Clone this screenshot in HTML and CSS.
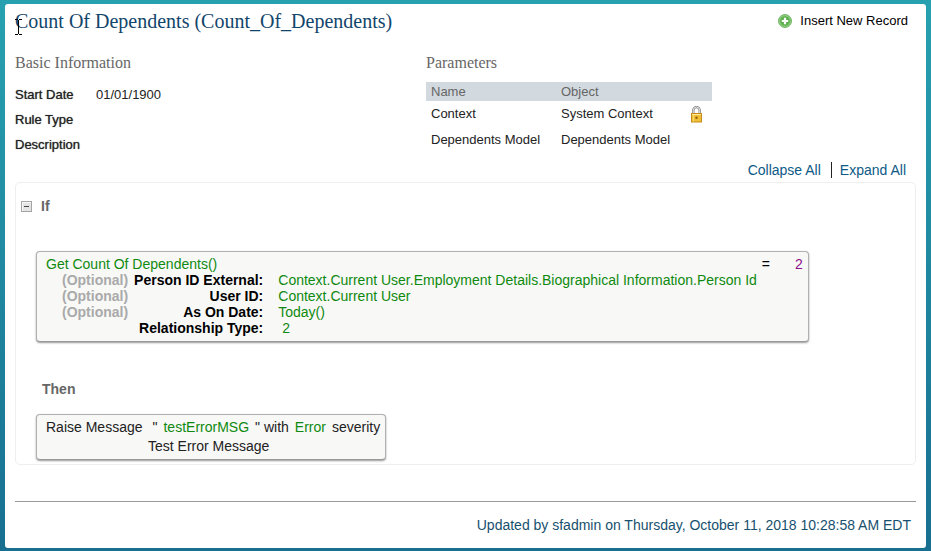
FILE: index.html
```
<!DOCTYPE html>
<html lang="en">
<head>
    <meta charset="UTF-8">
    <meta name="viewport" content="width=device-width, initial-scale=1.0">
    <title>Count Of Dependents</title>
    <link rel="stylesheet" href="styles.css">
</head>
<body>
    <main class="panel">
        <header class="header">
            <h1>Count Of Dependents (Count_Of_Dependents)</h1>
            <button type="button" class="insert">
                <svg width="14" height="14" viewBox="0 0 14 14" aria-hidden="true">
                    <circle cx="7" cy="7" r="6.5" fill="#8ccb7c" stroke="#79b86c"/>
                    <circle cx="7" cy="7" r="4.8" fill="#5fb04f"/>
                    <path d="M7 3.8v6.4M3.8 7h6.4" stroke="#fff" stroke-width="2.2"/>
                </svg>
                Insert New Record
            </button>
        </header>
        <svg class="cursor" width="7" height="16" viewBox="0 0 7 16" aria-hidden="true">
            <path d="M0 .5h3M4 .5h3M3.5 1v14M0 15.5h3M4 15.5h3" stroke="#000" fill="none"/>
        </svg>

        <div class="details">
            <section>
                <h2>Basic Information</h2>
                <dl class="info">
                    <dt>Start Date</dt><dd>01/01/1900</dd>
                    <dt>Rule Type</dt><dd></dd>
                    <dt>Description</dt><dd></dd>
                </dl>
            </section>
            <section>
                <h2>Parameters</h2>
                <table class="params">
                    <thead>
                        <tr><th>Name</th><th>Object</th><th></th></tr>
                    </thead>
                    <tbody>
                        <tr>
                            <td>Context</td>
                            <td>System Context</td>
                            <td>
                                <svg width="13" height="17" viewBox="0 0 13 17" aria-hidden="true">
                                    <path d="M3.3 8V4.3a3.2 3.2 0 0 1 6.4 0V8" fill="none" stroke="#858585" stroke-width="2.4"/>
                                    <path d="M3.3 8V4.3a3.2 3.2 0 0 1 6.4 0V8" fill="none" stroke="#e2e2e2" stroke-width="1"/>
                                    <rect x="1.5" y="7.5" width="10" height="8.5" fill="#efbf35" stroke="#c68a1c"/>
                                    <path d="M2 8.5h9" stroke="#ffe995"/>
                                    <path d="M3.5 9v6.5" stroke="#f9d965"/>
                                    <circle cx="6.5" cy="11.8" r="1.2" fill="#94600d"/>
                                </svg>
                            </td>
                        </tr>
                        <tr><td>Dependents Model</td><td>Dependents Model</td><td></td></tr>
                    </tbody>
                </table>
            </section>
        </div>

        <nav class="tools">
            <a href="#">Collapse All</a>
            <a href="#">Expand All</a>
        </nav>

        <section class="rule">
            <div class="rule-head">
                <button type="button" class="toggle" aria-label="Collapse">
                    <svg width="11" height="11" viewBox="0 0 11 11" aria-hidden="true">
                        <rect x=".5" y=".5" width="10" height="10" fill="#e4e4e4" stroke="#a5a5a5"/>
                        <path d="M1 1.5h9M1.5 1v9" stroke="#f8f8f8"/>
                        <path d="M3 5.5h5" stroke="#444"/>
                    </svg>
                </button>
                <h3>If</h3>
            </div>
            <div class="box condition">
                <div>
                    <div class="value">Get Count Of Dependents()</div>
                    <div class="args">
                        <span class="optional">(Optional)</span><b>Person ID External:</b><span class="value">Context.Current User.Employment Details.Biographical Information.Person Id</span>
                        <span class="optional">(Optional)</span><b>User ID:</b><span class="value">Context.Current User</span>
                        <span class="optional">(Optional)</span><b>As On Date:</b><span class="value">Today()</span>
                        <span></span><b>Relationship Type:</b><span class="value literal">2</span>
                    </div>
                </div>
                <span class="operator">=</span>
                <span class="number">2</span>
            </div>
            <h3 class="then">Then</h3>
            <div class="box action">
                <div class="message">
                    <span>Raise Message</span>
                    <span class="quote">"</span>
                    <span class="value">testErrorMSG</span>
                    <span>" with</span>
                    <span class="value">Error</span>
                    <span>severity</span>
                </div>
                <div class="message-text">Test Error Message</div>
            </div>
        </section>

        <footer class="footer">
            <a href="#">Updated by sfadmin on Thursday, October 11, 2018 10:28:58 AM EDT</a>
        </footer>
    </main>
</body>
</html>
```
FILE: styles.css
```
* {
    box-sizing: border-box;
}
body {
    margin: 0;
    padding: 4px 5px 3px;
    min-height: 100vh;
    display: flex;
    background: linear-gradient(#27a1b0, #186f90);
    font-family: "Liberation Sans", Arial, sans-serif;
    font-size: 14px;
    line-height: 16px;
    color: #222;
}
h1, h2, h3, dl, dd {
    margin: 0;
}
button {
    font: inherit;
    color: inherit;
    background: none;
    border: none;
    padding: 0;
    cursor: pointer;
}
svg {
    display: block;
}
a {
    color: #0d5a86;
    text-decoration: none;
}
.panel {
    position: relative;
    flex: 1;
    padding: 5px 10px 0;
    background: #fff;
    border-radius: 3px;
}
.header {
    display: flex;
    justify-content: space-between;
    align-items: center;
    padding-right: 8px;
}
h1 {
    font: 20px/24px "Liberation Serif", "Times New Roman", serif;
    color: #12456b;
}
.insert {
    display: flex;
    align-items: center;
    gap: 8px;
    font-size: 13px;
    color: #000;
}
/* text pointer over the title */
.cursor {
    position: absolute;
    left: 10px;
    top: 15px;
}
.details {
    display: grid;
    grid-template-columns: 411px 1fr;
    margin-top: 20px;
    font-size: 13px;
}
h2 {
    font: 16px/20px "Liberation Serif", "Times New Roman", serif;
    color: #666;
}
.info {
    display: grid;
    grid-template-columns: 81px 1fr;
    grid-auto-rows: 25px;
    line-height: 25px;
    margin-top: 9px;
}
.info dt {
    text-shadow: 0 0 1px #555;
}
.params {
    width: 286px;
    table-layout: fixed;
    border-collapse: collapse;
    margin-top: 9px;
}
.params th, .params td {
    padding: 0 5px;
    height: 26px;
    text-align: left;
    font-weight: normal;
}
.params th {
    width: 130px;
    height: 19px;
    background: #d2d9df;
    color: #666;
}
.params th:last-child {
    width: 26px;
}
.params td:last-child {
    padding: 0 4px;
}
.tools {
    display: flex;
    justify-content: flex-end;
    margin-top: 5px;
    padding-right: 10px;
}
.tools a + a {
    border-left: 1px solid #222;
    margin-left: 10px;
    padding-left: 8px;
}
.rule {
    margin-top: 4px;
    padding: 15px 5px 4px;
    border: 1px solid #eee;
    border-radius: 5px;
}
.rule-head {
    display: flex;
    align-items: center;
    gap: 9px;
}
h3 {
    font-size: 14px;
    color: #666;
}
.box {
    width: fit-content;
    margin-left: 15px;
    padding: 4px 5px 5px 9px;
    background: #f8f8f7;
    border: 1px solid #b0b0b0;
    border-bottom-color: #999;
    border-radius: 4px;
    box-shadow: 0 1px 2px #999;
}
.value {
    color: #0f8a0f;
}
.condition {
    display: flex;
    margin-top: 37px;
}
.args {
    display: grid;
    grid-template-columns: auto auto auto;
    column-gap: 6px;
    padding-left: 16px;
}
.args b {
    text-align: right;
    color: #000;
}
.args .value {
    padding-left: 9px;
}
.args .literal {
    padding-left: 13px;
}
.args .optional {
    font-weight: bold;
    color: #aaa;
}
.operator {
    margin-left: 5px;
    color: #000;
}
.number {
    margin-left: 25px;
    color: #8b108b;
}
.then {
    margin: 39px 0 17px 21px;
}
.action {
    line-height: 19px;
    padding: 3px 5px 3px 9px;
}
.message {
    display: flex;
    gap: 6px;
}
.quote {
    margin-left: 4px;
}
.message-text {
    padding-left: 102px;
}
.footer {
    margin-top: 36px;
    padding: 15px 5px;
    border-top: 1px solid #999;
    text-align: right;
}
.footer a {
    color: #17506e;
}
```
